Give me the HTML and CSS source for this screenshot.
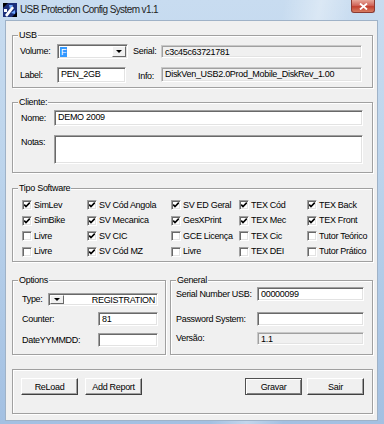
FILE: index.html
```html
<!DOCTYPE html>
<html lang="pt">
<head>
    <meta charset="UTF-8">
    <meta name="viewport" content="width=device-width, initial-scale=1.0">
    <title>USB Protection Config System v1.1</title>
    <link rel="stylesheet" href="styles.css">
</head>
<body>
    <div class="window">
        <div class="titlebar">
            <svg class="app-icon" width="14" height="14" viewBox="0 0 14 14">
                <rect width="14" height="14" fill="#1b2f7a"/>
                <polygon points="0,0 5,0 0,5" fill="#000"/>
                <polygon points="14,14 9,14 14,9" fill="#000"/>
                <polygon points="2,12 9,3 11,5 4,14" fill="#fff"/>
                <polygon points="6,2 10,2 7,6" fill="#6fa8ff"/>
                <polygon points="12,7 12,11 8,10" fill="#6fa8ff"/>
                <rect x="1" y="6" width="3" height="3" fill="#fff"/>
            </svg>
            <span class="title">USB Protection Config System v1.1</span>
            <div class="close-btn">
                <svg width="9" height="7" viewBox="0 0 9 7">
                    <path d="M1 0.5 L8 6.5 M8 0.5 L1 6.5" stroke="#fff" stroke-width="1.8"/>
                </svg>
            </div>
        </div>

        <div class="client">
            <!-- USB -->
            <div class="group usb">
                <span class="group-title">USB</span>
                <span class="lbl">Volume:</span>
                <div class="field combo volume">
                    <span class="combo-text"><span class="sel">F</span></span>
                    <span class="drop"><i class="arrow"></i></span>
                </div>
                <span class="lbl gap-left">Serial:</span>
                <div class="field ro serial">c3c45c63721781</div>

                <span class="lbl">Label:</span>
                <div class="field pen">PEN_2GB</div>
                <span class="lbl gap-left info">Info:</span>
                <div class="field ro info-box">DiskVen_USB2.0Prod_Mobile_DiskRev_1.00</div>
            </div>

            <!-- Cliente -->
            <div class="group cliente">
                <span class="group-title">Cliente:</span>
                <span class="lbl">Nome:</span>
                <div class="field nome">DEMO 2009</div>
                <span class="lbl top">Notas:</span>
                <div class="field notas"></div>
            </div>

            <!-- Tipo Software -->
            <div class="group software">
                <span class="group-title">Tipo Software</span>
                <label class="check"><span class="cb on"></span>SimLev</label>
                <label class="check"><span class="cb on"></span>SV Cód Angola</label>
                <label class="check"><span class="cb on"></span>SV ED Geral</label>
                <label class="check"><span class="cb on"></span>TEX Cód</label>
                <label class="check"><span class="cb on"></span>TEX Back</label>

                <label class="check"><span class="cb on"></span>SimBike</label>
                <label class="check"><span class="cb on"></span>SV Mecanica</label>
                <label class="check"><span class="cb on"></span>GesXPrint</label>
                <label class="check"><span class="cb on"></span>TEX Mec</label>
                <label class="check"><span class="cb on"></span>TEX Front</label>

                <label class="check"><span class="cb"></span>Livre</label>
                <label class="check"><span class="cb on"></span>SV CIC</label>
                <label class="check"><span class="cb"></span>GCE Licença</label>
                <label class="check"><span class="cb"></span>TEX Cic</label>
                <label class="check"><span class="cb"></span>Tutor Teórico</label>

                <label class="check"><span class="cb"></span>Livre</label>
                <label class="check"><span class="cb on"></span>SV Cód MZ</label>
                <label class="check"><span class="cb"></span>Livre</label>
                <label class="check"><span class="cb"></span>TEX DEI</label>
                <label class="check"><span class="cb"></span>Tutor Prático</label>
            </div>

            <div class="split">
                <!-- Options -->
                <div class="group options">
                    <span class="group-title">Options</span>
                    <div class="opt-row type-row">
                        <span class="lbl type-lbl">Type:</span>
                        <div class="field combo type">
                            <span class="drop"><i class="arrow"></i></span>
                            <span class="combo-text right">REGISTRATION</span>
                        </div>
                    </div>
                    <div class="opt-row counter-row">
                        <span class="lbl opt-lbl">Counter:</span>
                        <div class="field small">81</div>
                    </div>
                    <div class="opt-row date-row">
                        <span class="lbl opt-lbl">DateYYMMDD:</span>
                        <div class="field small"></div>
                    </div>
                </div>

                <!-- General -->
                <div class="group general">
                    <span class="group-title">General</span>
                    <div class="gen-row serial-row">
                        <span class="lbl gen-lbl">Serial Number USB:</span>
                        <div class="field gen">00000099</div>
                    </div>
                    <div class="gen-row pass-row">
                        <span class="lbl gen-lbl">Password System:</span>
                        <div class="field gen"></div>
                    </div>
                    <div class="gen-row ver-row">
                        <span class="lbl gen-lbl">Versão:</span>
                        <div class="field ro gen ver">1.1</div>
                    </div>
                </div>
            </div>

            <!-- Buttons -->
            <div class="group buttons">
                <button class="btn">ReLoad</button>
                <button class="btn">Add Report</button>
                <button class="btn default push">Gravar</button>
                <button class="btn">Sair</button>
            </div>
        </div>
    </div>
</body>
</html>
```

FILE: styles.css
```css
* {
    box-sizing: border-box;
}
body {
    margin: 0;
    font-family: "Liberation Sans", Arial, sans-serif;
    font-size: 9px;
    letter-spacing: -0.3px;
    line-height: 11px;
    color: #000;
    background: #a9c6e6;
}
.window {
    width: 384px;
    height: 424px;
    display: flex;
    flex-direction: column;
    overflow: hidden;
    background:
        linear-gradient(100deg, rgba(255,255,255,0) 62%, rgba(255,255,255,0.35) 70%, rgba(255,255,255,0) 78%),
        linear-gradient(180deg, #c8dcf0 0, #bcd4ec 40%, #a3c0e2 100%);
}

/* title bar */
.titlebar {
    height: 20px;
    flex: none;
    display: flex;
    align-items: flex-start;
    padding-left: 3px;
}
.app-icon {
    margin-top: 3px;
    flex: none;
}
.title {
    margin-left: 3px;
    margin-top: 3px;
    font-size: 10px;
    letter-spacing: -0.6px;
    line-height: 14px;
    color: #1e1e1e;
}
.close-btn {
    margin-left: auto;
    margin-right: 9px;
    width: 24px;
    height: 13px;
    display: flex;
    align-items: center;
    justify-content: center;
    border: 1px solid #8a3a32;
    border-top: none;
    border-radius: 0 0 3px 3px;
    background: linear-gradient(180deg, #e8a89a 0, #d0655a 45%, #c2402f 55%, #d77c62 100%);
}

/* client area */
.client {
    flex: 1;
    margin: 0 6px 3px 5px;
    padding: 0 4px 0 6px;
    background: #f0f0f0;
    border: 1px solid #9fb2c7;
}

/* group box */
.group {
    position: relative;
    border: 1px solid #a0a0a0;
    box-shadow: inset 1px 1px 0 #fff, 1px 1px 0 #fff;
}
.group-title {
    position: absolute;
    top: -7px;
    left: 5px;
    padding: 0 1px;
    line-height: 12px;
    background: #f0f0f0;
}
.lbl {
    white-space: nowrap;
}
.lbl.top {
    align-self: start;
    padding-top: 2px;
}

/* inputs */
.field {
    height: 15px;
    padding: 1px 3px 0;
    line-height: 11px;
    background: #fff;
    border: 1px solid;
    border-color: #a0a0a0 #fff #fff #a0a0a0;
    box-shadow: inset 1px 1px 0 #696969, inset -1px -1px 0 #e3e3e3;
    white-space: nowrap;
    overflow: hidden;
}
.field.ro {
    background: #f0f0f0;
    box-shadow: inset 1px 1px 0 #a0a0a0, inset -1px -1px 0 #e3e3e3;
    border-color: #c8c8c8 #fff #fff #c8c8c8;
}
.combo {
    display: flex;
    padding: 1px;
}
.combo-text {
    flex: 1;
    padding: 1px 1px 0;
}
.combo-text.right {
    text-align: right;
    padding-right: 1px;
}
.sel {
    background: #3399ff;
    color: #fff;
    padding: 0 1px;
}
.drop {
    width: 14px;
    display: flex;
    align-items: center;
    justify-content: center;
    background: #f0f0f0;
    border: 1px solid;
    border-color: #fff #696969 #696969 #fff;
}
.arrow {
    width: 0;
    height: 0;
    border-left: 3px solid transparent;
    border-right: 3px solid transparent;
    border-top: 3px solid #000;
}

/* USB */
.usb {
    margin-top: 14px;
    display: grid;
    grid-template-columns: 37px 71px 33px 201px;
    grid-template-rows: 15px 16px;
    row-gap: 8px;
    align-items: center;
    padding: 8px 0 4px 7px;
}
.gap-left {
    padding-left: 5px;
}
.gap-left.info {
    padding-left: 10px;
    padding-top: 3px;
}
.serial {
    height: 13px;
    line-height: 10px;
}
.pen {
    width: 69px;
    height: 16px;
}
.info-box {
    align-self: start;
    height: 15px;
}

/* Cliente */
.cliente {
    margin-top: 14px;
    display: grid;
    grid-template-columns: 33px 1fr;
    grid-template-rows: 16px 29px;
    row-gap: 9px;
    align-items: center;
    padding: 7px 9px 8px 8px;
}
.nome {
    height: 16px;
}
.notas {
    height: 29px;
}

/* Tipo Software */
.software {
    margin-top: 15px;
    display: grid;
    grid-template-columns: 65px 84px 68px 68px 1fr;
    grid-auto-rows: 15.5px;
    padding: 8.5px 0 0 9px;
    height: 74px;
}
.check {
    display: flex;
    align-items: center;
    white-space: nowrap;
}
.cb {
    width: 10px;
    height: 10px;
    margin-right: 2px;
    flex: none;
    background: #fff;
    border: 1px solid;
    border-color: #a0a0a0 #fff #fff #a0a0a0;
    box-shadow: inset 1px 1px 0 #696969, inset -1px -1px 0 #e3e3e3;
}
.cb.on {
    background: #fff url("data:image/svg+xml;utf8,<svg xmlns='http://www.w3.org/2000/svg' width='8' height='8' viewBox='0 0 8 8'><path d='M1.2 3.6 L3 5.6 L6.8 1.6' fill='none' stroke='black' stroke-width='1.6'/></svg>") center / 8px 8px no-repeat;
}

/* Options / General */
.split {
    margin-top: 18px;
    display: flex;
    gap: 4px;
}
.options {
    width: 154px;
    height: 75px;
    padding: 12px 0 0 9px;
}
.general {
    flex: 1;
    height: 75px;
    padding: 6px 0 0 5px;
}
.opt-row,
.gen-row {
    display: flex;
    align-items: center;
}
.type-lbl {
    width: 26px;
}
.type {
    width: 110px;
    height: 13px;
}
.type .combo-text {
    line-height: 9px;
}
.counter-row {
    margin-top: 6px;
}
.date-row {
    margin-top: 7px;
}
.opt-lbl {
    width: 76px;
}
.small {
    width: 60px;
    height: 14px;
}
.gen-lbl {
    width: 81px;
}
.gen {
    width: 107px;
    height: 14px;
}
.pass-row {
    margin-top: 11px;
}
.ver-row {
    margin-top: 6px;
}
.ver {
    height: 13px;
}

/* buttons */
.buttons {
    margin-top: 14px;
    height: 45px;
    display: flex;
    align-items: flex-start;
    padding: 8px 8px 0 8px;
}
.btn {
    width: 57px;
    height: 17px;
    margin-right: 7px;
    padding: 0;
    font-family: inherit;
    font-size: 9px;
    letter-spacing: -0.3px;
    color: #000;
    background: #f0f0f0;
    border: 1px solid;
    border-color: #fff #404040 #404040 #fff;
    box-shadow: inset -1px -1px 0 #a0a0a0;
}
.btn:last-child {
    margin-right: 0;
}
.btn.push {
    margin-left: auto;
    margin-right: 5px;
}
.btn.default {
    border-color: #505050;
    box-shadow: inset 1px 1px 0 #fff, inset -1px -1px 0 #808080;
}
```
